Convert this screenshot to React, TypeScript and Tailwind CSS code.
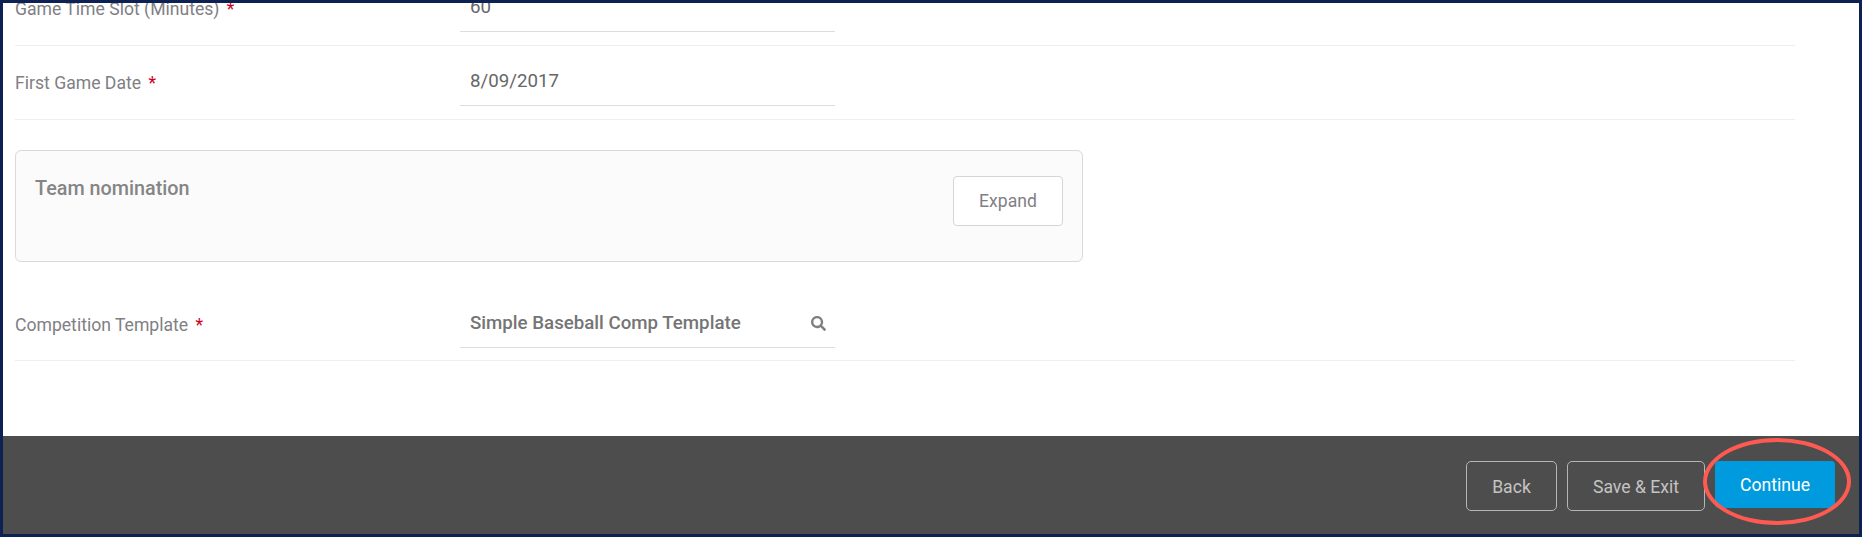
import React from 'react';
import { FaSearch } from 'react-icons/fa';

function FormRow({ label, value, icon }: { label: string; value: string; icon?: boolean }) {
  return (
    <div className="flex h-[74px] border-b border-[#eeeeee]">
      <div className={`w-[445px] text-[17.6px] leading-[24px] text-[#808084] ${icon ? 'pt-[26px]' : 'pt-[25px]'}`}>
        {label} <span className="ml-[3px] text-[#d0021b]">*</span>
      </div>
      <div
        className={`flex w-[375px] items-start justify-between border-b border-[#dddddd] pl-[10px] pr-[9px] ${
          icon ? 'h-[61px] pt-[24px]' : 'h-[60px] pt-[23px]'
        }`}
      >
        <span className={`text-[18.7px] leading-[24px] ${icon ? 'font-medium text-[#757575]' : 'text-[#666666]'}`}>{value}</span>
        {icon && <FaSearch size={15} className="mt-[5px] text-[#808080]" />}
      </div>
    </div>
  );
}

export default function App() {
  return (
    <div className="relative flex h-[537px] w-[1862px] flex-col overflow-hidden border-[3px] border-[#0d2252] font-['Roboto',sans-serif]">
      <main className="h-[433px] overflow-hidden bg-white px-[12px]">
        <div className="-mt-[31px] w-[1780px]">
          <FormRow label="Game Time Slot (Minutes)" value="60" />
          <FormRow label="First Game Date" value="8/09/2017" />

          <div className="mt-[30px] flex h-[112px] w-[1068px] items-start justify-between rounded-[6px] border border-[#d9d9d9] bg-[#fbfbfb] pl-[19px] pr-[19px] pt-[25px]">
            <h3 className="mt-[1px] text-[19.8px] font-medium leading-[24px] text-[#858585]">Team nomination</h3>
            <button className="h-[50px] w-[110px] rounded-[4px] border border-[#d5d5d5] bg-white text-[17.6px] text-[#808084]">
              Expand
            </button>
          </div>

          <div className="mt-[25px]">
            <FormRow label="Competition Template" value="Simple Baseball Comp Template" icon />
          </div>
        </div>
      </main>

      <footer className="flex flex-1 items-start justify-end bg-[#4d4d4d] pr-[24px] pt-[25px]">
        <button className="h-[50px] w-[91px] rounded-[5px] border border-[#b5b5b5] pt-[2px] text-[17.6px] text-[#c4c4c4]">Back</button>
        <button className="ml-[10px] h-[50px] w-[138px] rounded-[5px] border border-[#b5b5b5] pt-[2px] text-[17.6px] text-[#c4c4c4]">
          Save &amp; Exit
        </button>
        <button className="ml-[10px] h-[47px] w-[120px] rounded-[4px] bg-[#009bdf] pt-[2px] text-[17.6px] text-white">Continue</button>
      </footer>

      {/* red annotation round the Continue button */}
      <div className="absolute left-[1700px] top-[435px] h-[87px] w-[148px] rounded-[50%] border-[4px] border-[#ff5a52]" />
    </div>
  );
}
